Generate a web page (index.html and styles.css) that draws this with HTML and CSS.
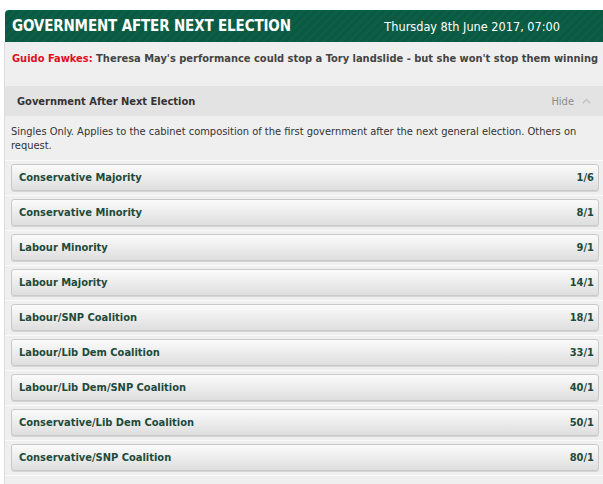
FILE: index.html
```html
<!DOCTYPE html>
<html>
<head>
<meta charset="utf-8">
<link rel="stylesheet" href="styles.css">
</head>
<body>
<div class="page">
  <div class="topbar">
    <h1 class="title">GOVERNMENT AFTER NEXT ELECTION</h1>
    <span class="date">Thursday 8th June 2017, 07:00</span>
  </div>
  <div class="content">
    <p class="quote"><span class="source">Guido Fawkes:</span> Theresa May's performance could stop a Tory landslide - but she won't stop them winning</p>
    <div class="market">
      <div class="market-head">
        <span class="market-name">Government After Next Election</span>
        <span class="toggle">Hide <svg class="chev" width="9" height="6" viewBox="0 0 9 6"><path d="M0.8 5.2 L4.5 1.5 L8.2 5.2" fill="none" stroke="#c2c2c2" stroke-width="1.4"/></svg></span>
      </div>
      <p class="desc">Singles Only. Applies to the cabinet composition of the first government after the next general election. Others on request.</p>
      <ul class="selections">
        <li class="sel"><button class="bet"><span>Conservative Majority</span><span>1/6</span></button></li>
        <li class="sel"><button class="bet"><span>Conservative Minority</span><span>8/1</span></button></li>
        <li class="sel"><button class="bet"><span>Labour Minority</span><span>9/1</span></button></li>
        <li class="sel"><button class="bet"><span>Labour Majority</span><span>14/1</span></button></li>
        <li class="sel"><button class="bet"><span>Labour/SNP Coalition</span><span>18/1</span></button></li>
        <li class="sel"><button class="bet"><span>Labour/Lib Dem Coalition</span><span>33/1</span></button></li>
        <li class="sel"><button class="bet"><span>Labour/Lib Dem/SNP Coalition</span><span>40/1</span></button></li>
        <li class="sel"><button class="bet"><span>Conservative/Lib Dem Coalition</span><span>50/1</span></button></li>
        <li class="sel"><button class="bet"><span>Conservative/SNP Coalition</span><span>80/1</span></button></li>
      </ul>
    </div>
  </div>
</div>
</body>
</html>
```
FILE: styles.css
```css
html, body {
  margin: 0;
  padding: 0;
  background: #f7f7f7;
}
body {
  font-family: "DejaVu Sans Condensed", "DejaVu Sans", sans-serif;
  color: #333;
}
.page {
  padding: 10px 0 0 4px;
  background: #fff;
}
.topbar {
  display: flex;
  align-items: center;
  justify-content: space-between;
  height: 32px;
  margin-left: 1px;
  padding: 0 43px 0 7px;
  background: repeating-linear-gradient(135deg, #0c5f46 0 3px, #0a5a42 3px 6px);
  border-top-left-radius: 4px;
}
.title {
  margin: 0;
  font-size: 15px;
  font-weight: bold;
  color: #fff;
  letter-spacing: -0.15px;
}
.date {
  font-size: 12.6px;
  color: #fff;
}
.content {
  background: #efefef;
  border-left: 1px solid #dcdcdc;
  padding-bottom: 10px;
}
.quote {
  margin: 0;
  padding: 10px 0 0 7px;
  height: 35px;
  box-sizing: border-box;
  font-size: 11px;
  font-weight: bold;
  color: #444;
  white-space: nowrap;
}
.source {
  color: #e0101e;
}
.market-head {
  display: flex;
  justify-content: space-between;
  align-items: center;
  height: 30px;
  padding: 0 12px 0 12px;
  background: #e3e3e3;
  margin-top: 9px;
}
.market-name {
  font-size: 11px;
  font-weight: bold;
  color: #333;
}
.toggle {
  font-size: 11px;
  color: #8c8c8c;
  display: flex;
  align-items: center;
  gap: 8px;
}
.desc {
  margin: 0;
  padding: 9px 6px 7px 6px;
  font-size: 11px;
  line-height: 14px;
  color: #333;
  border-bottom: 1px solid #fafafa;
}
.selections {
  list-style: none;
  margin: 0;
  padding: 0;
}
.sel {
  padding: 3px 4px 4px 6px;
  border-bottom: 1px solid #fafafa;
}
.bet {
  display: flex;
  justify-content: space-between;
  align-items: center;
  width: 100%;
  height: 27px;
  padding: 0 4px 0 7px;
  border: 1px solid #c9c9c9;
  border-radius: 3px;
  background: linear-gradient(#fbfbfb, #dedede);
  font-family: inherit;
  font-size: 11px;
  font-weight: bold;
  color: #1d4a3a;
  box-shadow: 0 1px 0 #d5d5d5;
}
```
